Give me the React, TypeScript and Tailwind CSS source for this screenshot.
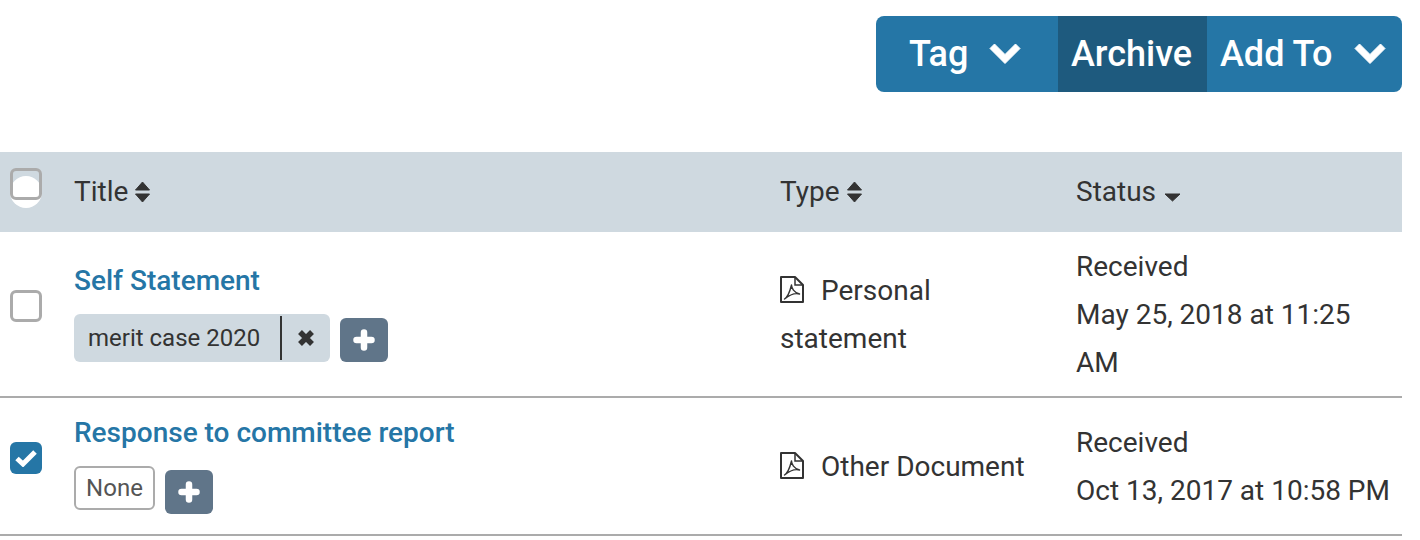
function Chevron({ className }: { className: string }) {
  return (
    <svg viewBox="0 0 32 22" className={className} fill="currentColor" stroke="currentColor" strokeWidth="1" strokeLinejoin="round">
      <path d="M5.5 1 16 11.5 26.5 1 31 5.5 16 20.5 1 5.5Z" />
    </svg>
  );
}

function Sort() {
  return (
    <svg viewBox="0 0 16 22" className="ml-[6px] h-[22px] w-[17px]" fill="currentColor" stroke="currentColor" strokeWidth="1" strokeLinejoin="round">
      <path d="M8 1 15 9H1Z" />
      <path d="M1 13H15L8 21Z" />
    </svg>
  );
}

function PlusButton() {
  return (
    <button className="flex h-[44px] w-[48px] items-center justify-center rounded-[6px] bg-[#607589] text-white">
      <svg viewBox="0 0 22 22" className="h-[22px] w-[22px]" stroke="currentColor" strokeWidth="6.5" strokeLinecap="round">
        <path d="M11 3.5V18.5M3.5 11H18.5" />
      </svg>
    </button>
  );
}

function Checkbox({ checked }: { checked?: boolean }) {
  if (checked) {
    return (
      <span className="flex h-[32px] w-[32px] items-center justify-center rounded-[6px] bg-[#2576a6] text-white">
        <svg viewBox="0 0 22 17" className="h-[17px] w-[22px]" fill="none" stroke="currentColor" strokeWidth="5">
          <path d="M2 8.5 8 14 20 2" />
        </svg>
      </span>
    );
  }
  return <span className="block h-[32px] w-[32px] rounded-[6px] border-[3px] border-[#ababab]" />;
}

function PdfIcon() {
  return (
    <svg viewBox="0 0 24 27" className="mr-[17px] inline-block h-[27px] w-[24px] align-[-3px] text-[#333333]" fill="none" stroke="currentColor">
      <path d="M1 1H15L23 9V26H1Z" strokeWidth="2" strokeLinejoin="round" />
      <path d="M15 1V9H23" strokeWidth="1.5" />
      <path d="M4.5 23C7 21.5 9.5 17 11.5 9C11.5 12 14 16.5 19.5 18C15.5 17 10 18.5 4.5 23Z" strokeWidth="1.4" strokeLinejoin="round" />
    </svg>
  );
}

export default function App() {
  return (
    <div className="h-[540px] w-[1420px] bg-white font-['Roboto',sans-serif] text-[28px] leading-[48px] text-[#333333] antialiased">
      <div className="w-[1402px]">
        {/* Actions */}
        <div className="flex justify-end pt-[16px]">
          <div className="flex h-[76px] overflow-hidden rounded-[8px] bg-[#2576a6] text-[36px] font-medium text-white">
            <button className="flex w-[182px] items-center pl-[33px]">
              Tag
              <Chevron className="ml-[21px] h-[22px] w-[32px]" />
            </button>
            <button className="w-[149px] bg-[#1e5a7e] pr-[2px] text-center">Archive</button>
            <button className="flex w-[195px] items-center pl-[13px]">
              Add To
              <Chevron className="ml-[22px] h-[22px] w-[32px]" />
            </button>
          </div>
        </div>

        {/* Header */}
        <div className="mt-[60px] grid h-[80px] grid-cols-[74px_706px_296px_326px] bg-[#cfd9e0]">
          <div className="relative pl-[10px] pt-[16px]">
            <span className="absolute left-[10px] top-[24px] h-[32px] w-[32px] rounded-full bg-white" />
            <span className="relative block h-[32px] w-[32px] rounded-[6px] border-[3px] border-[#ababab]" />
          </div>
          <div className="flex items-center">
            Title
            <Sort />
          </div>
          <div className="flex items-center">
            Type
            <Sort />
          </div>
          <div className="flex items-center">
            Status
            <svg viewBox="0 0 17 9" className="ml-[8px] mt-[11px] h-[9px] w-[17px]" fill="currentColor" stroke="currentColor" strokeLinejoin="round">
              <path d="M1 1H16L8.5 8Z" />
            </svg>
          </div>
        </div>

        {/* Row 1 */}
        <div className="grid h-[166px] grid-cols-[74px_706px_296px_326px] border-b-2 border-[#ababab]">
          <div className="pl-[10px] pt-[58px]">
            <Checkbox />
          </div>
          <div className="pt-[25px]">
            <a className="font-medium text-[#2576a6]">Self Statement</a>
            <div className="mt-[9px] flex items-start gap-[10px]">
              <div className="flex h-[48px] w-[256px] items-center rounded-[6px] bg-[#cfd9e0] text-[24px]">
                <span className="w-[208px] border-r-2 border-[#333333] pl-[14px] leading-[44px]">merit case 2020</span>
                <svg viewBox="0 0 18 18" className="ml-[15px] h-[18px] w-[18px]" stroke="currentColor" strokeWidth="5.5">
                  <path d="M3 3 15 15M15 3 3 15" />
                </svg>
              </div>
              <div className="mt-[4px]">
                <PlusButton />
              </div>
            </div>
          </div>
          <div className="pr-[20px] pt-[35px]">
            <PdfIcon />
            Personal statement
          </div>
          <div className="pr-[12px] pt-[11px]">
            Received
            <br />
            May 25, 2018 at 11:25 AM
          </div>
        </div>

        {/* Row 2 */}
        <div className="grid h-[138px] grid-cols-[74px_706px_296px_326px] border-b-2 border-[#ababab]">
          <div className="pl-[10px] pt-[44px]">
            <Checkbox checked />
          </div>
          <div className="pt-[11px]">
            <a className="font-medium text-[#2576a6]">Response to committee report</a>
            <div className="mt-[9px] flex items-start gap-[10px]">
              <div className="flex h-[44px] w-[81px] items-center justify-center rounded-[6px] border-2 border-[#ababab] text-[24px] text-[#555555]">
                None
              </div>
              <div className="mt-[4px]">
                <PlusButton />
              </div>
            </div>
          </div>
          <div className="pr-[20px] pt-[45px]">
            <PdfIcon />
            Other Document
          </div>
          <div className="pt-[21px]">
            Received
            <br />
            <span className="whitespace-nowrap">Oct 13, 2017 at 10:58 PM</span>
          </div>
        </div>
      </div>
    </div>
  );
}
